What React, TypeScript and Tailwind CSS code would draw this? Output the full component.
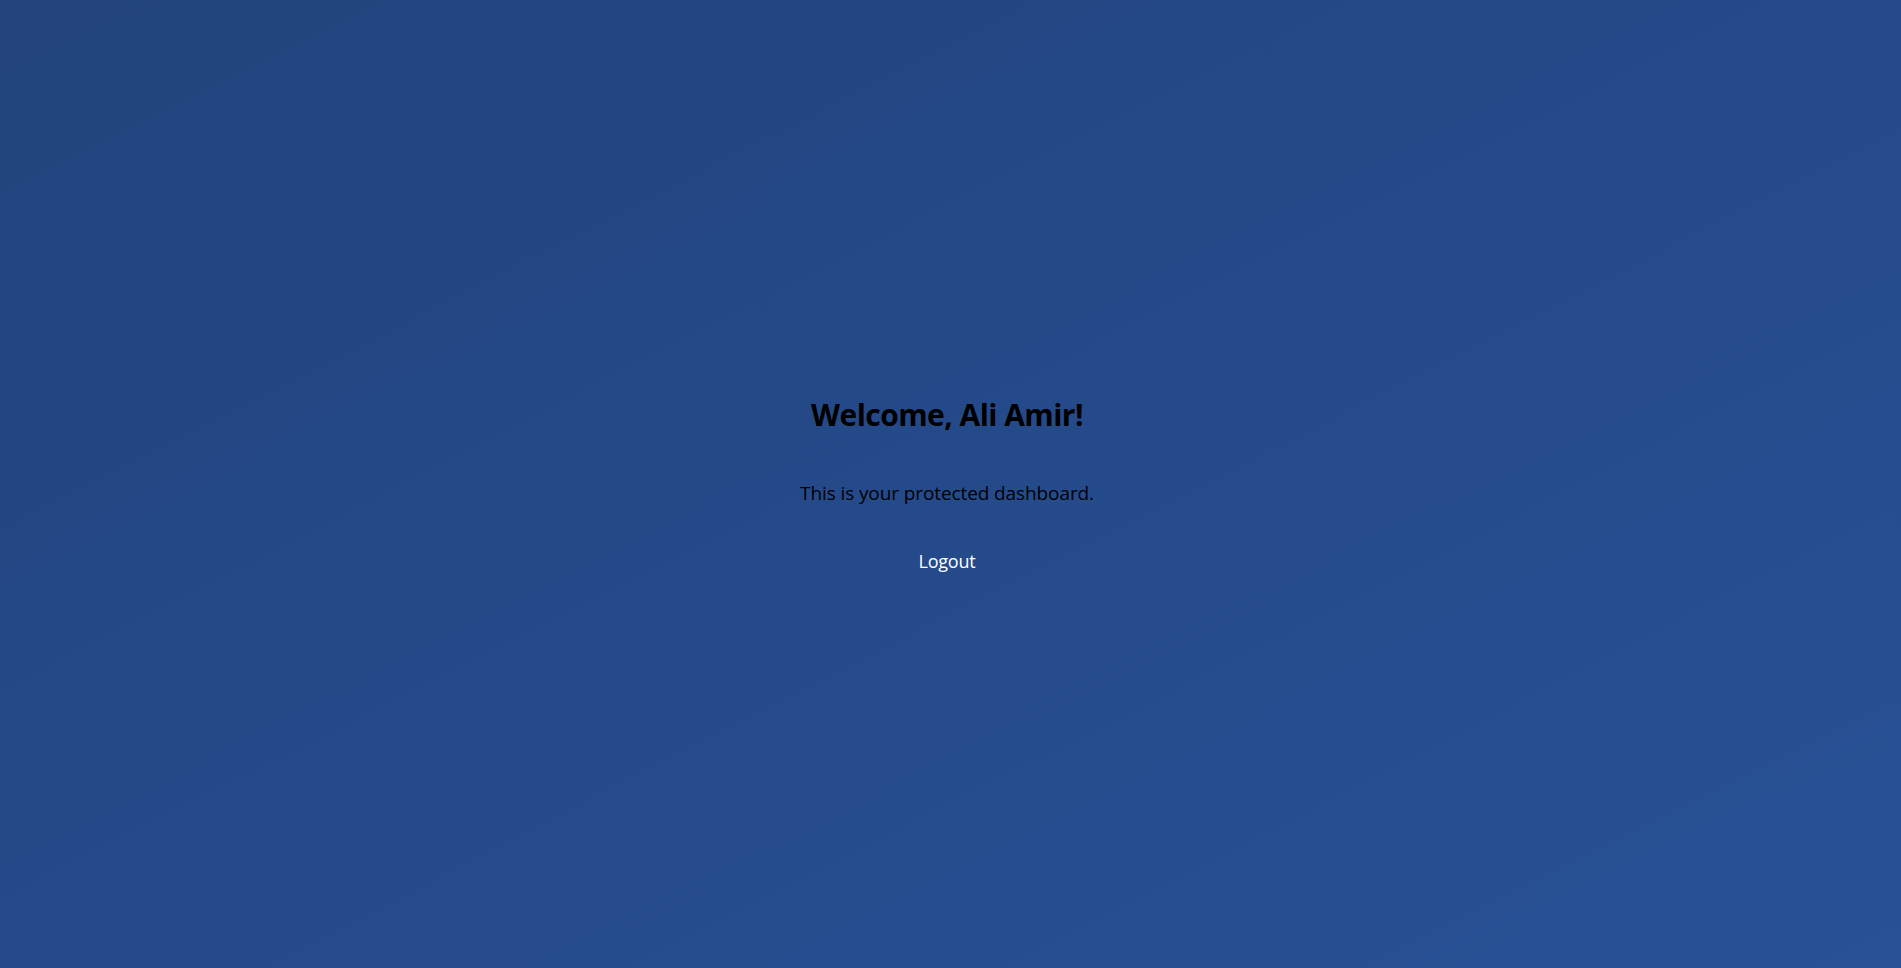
import React from "react";

export default function App() {
  return (
    <div
      className="w-full h-[968px] bg-gradient-to-br from-[#22437d] to-[#285196] flex flex-col items-center justify-center text-center pr-[7px]"
      style={{ fontFamily: '"Open Sans", "Noto Sans", sans-serif' }}
    >
      <div className="flex flex-col items-center">
        <h1 className="text-[30px] leading-[38px] font-bold text-black tracking-[-0.55px]">Welcome, Ali Amir!</h1>
        <p className="mt-[46px] text-[19px] leading-[26px] text-black tracking-[-0.1px]">This is your protected dashboard.</p>
        <button className="mt-[43px] text-[18px] leading-[24px] text-white bg-transparent tracking-[-0.2px]">Logout</button>
      </div>
    </div>
  );
}
